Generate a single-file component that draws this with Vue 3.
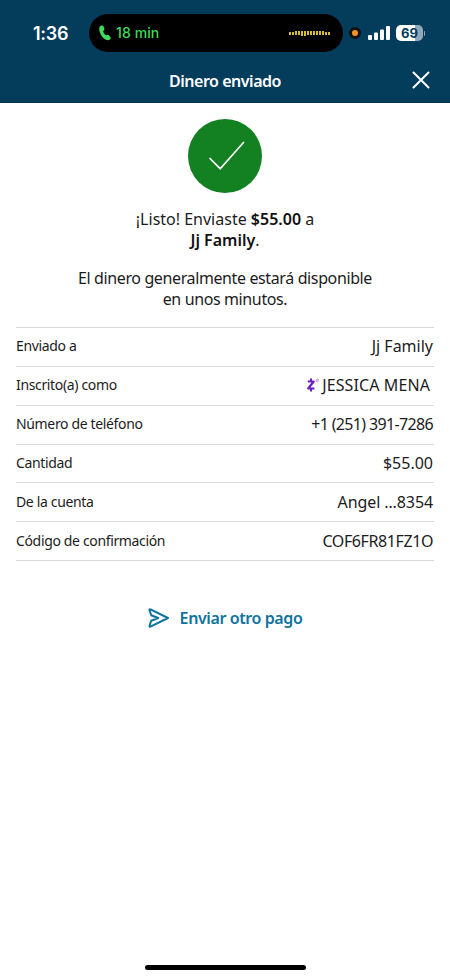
<template>
  <div class="screen">
    <header class="top">
      <div class="status-bar">
        <span class="time">1:36</span>
        <div class="island">
          <svg class="phone" viewBox="0 0 12 16" width="12" height="16"><path d="M.8 1.600C1.800.300 3.900 0 4.600 1.500L5.300 3.700C5.600 4.800 4.700 5.400 4.200 6.200C4.600 8 5.600 9.400 7.200 10.300C8 9.900 8.900 9.500 9.700 10.200L11.300 11.900C12.200 12.900 11.500 14.200 10.500 14.800C8.600 16 5.300 14.500 3.400 12C1.200 9.100-.8 4.400.8 1.600Z" fill="#3ddc5c"/></svg>
          <span class="call-time">18 min</span>
          <div class="wave">
            <i v-for="(h, i) in wave" :key="i" :style="{ height: h + 'px' }"></i>
          </div>
        </div>
        <span class="mic-dot"></span>
        <svg class="signal" viewBox="0 0 22 14" width="22" height="14" fill="#fff">
          <rect x="0" y="9" width="4" height="5" rx="1"/>
          <rect x="6" y="6.500" width="4" height="7.500" rx="1"/>
          <rect x="12" y="3.500" width="4" height="10.500" rx="1"/>
          <rect x="18" y="0" width="4" height="14" rx="1"/>
        </svg>
        <div class="battery"><span>69</span></div>
        <i class="battery-tip"></i>
      </div>
      <div class="title-bar">
        <h1>Dinero enviado</h1>
        <button class="close" aria-label="Cerrar">
          <svg viewBox="0 0 18 18" width="18" height="18" fill="none" stroke="#fff" stroke-width="2" stroke-linecap="round"><path d="M1.500 1.500l15 15M16.500 1.500l-15 15"/></svg>
        </button>
      </div>
    </header>

    <main>
      <svg class="success" viewBox="0 0 74 74" width="74" height="74">
        <circle cx="37" cy="37" r="37" fill="#138121"/>
        <path d="M22 39.500L32.200 49.700L55.500 23.500" fill="none" stroke="#fff" stroke-width="1.700" stroke-linecap="round"/>
      </svg>
      <p class="message">¡Listo! Enviaste <b>$55.00</b> a<br><b>Jj Family</b>.</p>
      <p class="message note">El dinero generalmente estará disponible<br>en unos minutos.</p>

      <dl class="details">
        <div v-for="row in rows" :key="row.label" class="row">
          <dt>{{ row.label }}</dt>
          <dd :class="row.type">
            <svg v-if="row.type === 'zelle'" viewBox="0 0 14 16" width="14" height="16" fill="none" stroke="#6a1fc4">
              <path d="M1.800 4.500H7.700L2.200 11.500H8.500" stroke-width="2.200" stroke-linejoin="round"/>
              <path d="M5 1.500V4M5 12V14.500" stroke-width="2"/>
              <circle cx="11.300" cy="3.400" r="1.400" fill="#dcc8f1" stroke="#c09be6" stroke-width=".8"/>
            </svg>
            <span>{{ row.value }}</span>
          </dd>
        </div>
      </dl>

      <button class="again">
        <svg viewBox="0 0 22 20" width="22" height="20" fill="none" stroke="#0f739f" stroke-width="2" stroke-linejoin="round" stroke-linecap="round"><path d="M1.500 2.200Q1.300 1 2.500 1.400L20 10L2.500 18.600Q1.300 19 1.500 17.800L3.200 12.800L10.200 10L3.200 7.200Z"/></svg>
        <span>Enviar otro pago</span>
      </button>
    </main>

    <div class="home-indicator"></div>
  </div>
</template>

<script setup>
const wave = [3, 3, 4, 4, 5, 5, 4, 4, 4, 4, 4, 4, 3, 3]

const rows = [
  { label: 'Enviado a', value: 'Jj Family', type: 'person' },
  { label: 'Inscrito(a) como', value: 'JESSICA MENA', type: 'zelle' },
  { label: 'Número de teléfono', value: '+1 (251) 391-7286', type: 'tel' },
  { label: 'Cantidad', value: '$55.00', type: 'amount' },
  { label: 'De la cuenta', value: 'Angel ...8354', type: 'account' },
  { label: 'Código de confirmación', value: 'COF6FR81FZ1O', type: 'code' }
]
</script>

<style>
body {
  margin: 0;
  background: #fff;
}
</style>

<style scoped>
.screen {
  height: 978px;
  display: flex;
  flex-direction: column;
  overflow: hidden;
  background: #fff;
  color: #1c1c1c;
  font-family: "Noto Sans", sans-serif;
}

.top {
  height: 103px;
  flex: none;
  box-sizing: border-box;
  background: #043c5c;
  border-bottom: 1px solid #03304b;
  color: #fff;
}

.status-bar {
  height: 38px;
  padding: 14px 24px 0 33px;
  display: flex;
  align-items: center;
  font-family: Inter, sans-serif;
}

.time {
  width: 56px;
  font-size: 18px;
  font-weight: 600;
  letter-spacing: -0.3px;
}

.island {
  width: 254px;
  height: 38px;
  box-sizing: border-box;
  padding: 0 13px 0 10px;
  border-radius: 19px;
  background: #000;
  display: flex;
  align-items: center;
}

.call-time {
  margin: -2px 0 0 5px;
  color: #3ddc5c;
  font-size: 14px;
  font-weight: 500;
  letter-spacing: 0.1px;
}

.wave {
  margin-left: auto;
  display: flex;
  align-items: center;
  gap: 1px;
}

.wave i {
  width: 2px;
  background: #d9bd35;
}

.mic-dot {
  width: 6px;
  height: 6px;
  margin-left: 6px;
  border: 3px solid #111;
  border-radius: 50%;
  background: #f7931e;
}

.signal {
  margin-left: 7px;
}

.battery {
  width: 27px;
  height: 16px;
  margin-left: 6px;
  border-radius: 5px;
  background: linear-gradient(90deg, #fff 69%, #91a9b7 69%);
  color: #043c5c;
  font-size: 13px;
  font-weight: 700;
  line-height: 16px;
  text-align: center;
}

.battery-tip {
  width: 1px;
  height: 5px;
  margin-left: 1px;
  border-radius: 0 2px 2px 0;
  background: #91a9b7;
}

.title-bar {
  height: 54px;
  padding: 0 19px;
  display: grid;
  grid-template-columns: 20px 1fr 20px;
  align-items: center;
}

h1 {
  grid-column: 2;
  margin: 3px 0 0;
  font-size: 16px;
  font-weight: 600;
  line-height: 22px;
  letter-spacing: -0.47px;
  text-align: center;
}

button {
  padding: 0;
  border: 0;
  background: none;
  font: inherit;
}

.close {
  height: 18px;
  margin-top: 2px;
  display: flex;
  justify-content: center;
}

main {
  flex: 1;
  padding: 16px 16px 0;
  display: flex;
  flex-direction: column;
  align-items: center;
}

.success {
  flex: none;
}

.message {
  margin: 16px 0 0;
  font-size: 16px;
  line-height: 21px;
  text-align: center;
}

.message b {
  color: #111;
  font-weight: 600;
}

.note {
  margin-top: 17px;
  letter-spacing: -0.38px;
}

.details {
  align-self: stretch;
  margin: 17px 0 0;
  border-top: 1px solid #d9d9d9;
}

.row {
  height: 38.850px;
  box-sizing: border-box;
  padding-right: 1px;
  border-bottom: 1px solid #d9d9d9;
  display: flex;
  align-items: center;
  justify-content: space-between;
}

dt {
  margin-top: -2px;
  font-size: 14px;
  letter-spacing: -0.35px;
}

dd {
  margin: -1px 0 0;
  display: flex;
  align-items: center;
  font-size: 16px;
  letter-spacing: 0;
}

.zelle {
  padding-right: 3px;
  letter-spacing: 0.1px;
}

.zelle svg {
  margin-right: 2px;
}

.tel {
  letter-spacing: -0.65px;
}

.account {
  letter-spacing: -0.1px;
}

.code {
  letter-spacing: -0.4px;
}

.again {
  margin-top: 46px;
  display: flex;
  align-items: center;
  gap: 10px;
  color: #0f739f;
  font-size: 16px;
  font-weight: 600;
  line-height: 22px;
  letter-spacing: -0.4px;
}

.home-indicator {
  width: 161px;
  height: 5px;
  margin: 0 auto 8px;
  border-radius: 3px;
  background: #000;
}
</style>
